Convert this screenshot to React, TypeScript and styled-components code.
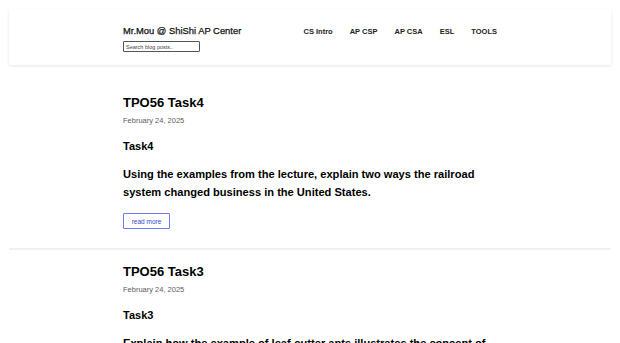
import styled, {createGlobalStyle} from 'styled-components';

const GlobalStyle = createGlobalStyle`
  body {
    margin: 0;
    background: #fff;
    font-family: "Liberation Sans", Arial, sans-serif;
    color: #000;
  }
`;

const Header = styled.header`
  margin: 9px 9px 0;
  height: 56px;
  background: #fff;
  border-radius: 2px;
  box-shadow: 0 1px 3px rgba(40, 40, 80, 0.12);
  display: flex;
  justify-content: center;
`;

const HeaderInner = styled.div`
  width: 374px;
  display: flex;
  justify-content: space-between;
  align-items: flex-start;
  padding-top: 16px;
`;

const Brand = styled.div`
  display: flex;
  flex-direction: column;
  gap: 4px;
`;

const SiteTitle = styled.a`
  font-size: 9.4px;
  line-height: 12px;
  color: #111;
  text-decoration: none;
  -webkit-text-stroke: 0.25px #111;
`;

const Search = styled.input`
  box-sizing: border-box;
  width: 77px;
  height: 11px;
  padding: 0 2px;
  border: 1px solid #555;
  border-radius: 1px;
  font-family: inherit;
  font-size: 5.5px;
  outline: none;
  &::placeholder {
    color: #444;
  }
`;

const Nav = styled.nav`
  display: flex;
  gap: 17px;
  padding-top: 1px;
`;

const NavLink = styled.a`
  font-size: 7.5px;
  line-height: 12px;
  font-weight: bold;
  color: #222;
  text-decoration: none;
`;

const List = styled.main`
  margin: 16px 9px 0;
`;

const Post = styled.article`
  padding: 14px 0 19px;
  border-bottom: 2px solid #f1f1f3;
  display: flex;
  justify-content: center;
`;

const PostBody = styled.div`
  width: 374px;
`;

const PostTitle = styled.h2`
  margin: 0;
  font-size: 13px;
  line-height: 16px;
  font-weight: bold;
`;

const PostDate = styled.div`
  margin-top: 5px;
  font-size: 7.5px;
  line-height: 10px;
  color: #5c5c5c;
`;

const SubHead = styled.h3`
  margin: 13px 0 0;
  font-size: 11px;
  line-height: 14px;
  font-weight: bold;
`;

const Prompt = styled.p`
  margin: 12px 0 0;
  font-size: 11.1px;
  line-height: 18px;
  font-weight: bold;
`;

const ReadMore = styled.button`
  margin-top: 12px;
  box-sizing: border-box;
  width: 47px;
  height: 16px;
  padding: 0;
  background: #fff;
  border: 1px solid #6b7bf5;
  border-radius: 1px;
  color: #3548d8;
  font-family: inherit;
  font-size: 6.5px;
  cursor: pointer;
`;

const posts = [
  {
    title: 'TPO56 Task4',
    date: 'February 24, 2025',
    head: 'Task4',
    text: 'Using the examples from the lecture, explain two ways the railroad system changed business in the United States.',
  },
  {
    title: 'TPO56 Task3',
    date: 'February 24, 2025',
    head: 'Task3',
    text: 'Explain how the example of leaf-cutter ants illustrates the concept of mutualism.',
  },
];

const navItems = ['CS Intro', 'AP CSP', 'AP CSA', 'ESL', 'TOOLS'];

export default function App() {
  return (
    <>
      <GlobalStyle />
      <Header>
        <HeaderInner>
          <Brand>
            <SiteTitle href="#">Mr.Mou @ ShiShi AP Center</SiteTitle>
            <Search placeholder="Search blog posts.." />
          </Brand>
          <Nav>
            {navItems.map((n) => (
              <NavLink key={n} href="#">
                {n}
              </NavLink>
            ))}
          </Nav>
        </HeaderInner>
      </Header>
      <List>
        {posts.map((p) => (
          <Post key={p.title}>
            <PostBody>
              <PostTitle>{p.title}</PostTitle>
              <PostDate>{p.date}</PostDate>
              <SubHead>{p.head}</SubHead>
              <Prompt>{p.text}</Prompt>
              <ReadMore>read more</ReadMore>
            </PostBody>
          </Post>
        ))}
      </List>
    </>
  );
}
